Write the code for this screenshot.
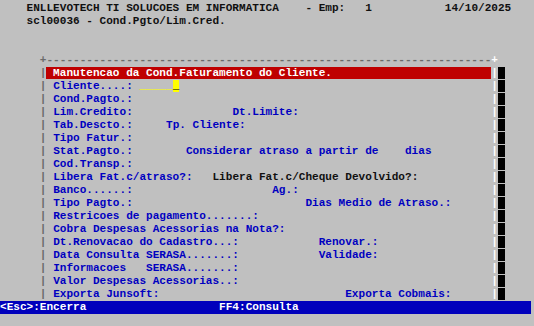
import type { ReactNode } from "react";

type Seg = { at: number; text: string; cls?: string };

const BLUE = "text-[#0000c0]";
const DARK = "text-[#101010]";

// renders one 80-column terminal line, segments placed by column
function Line({ segs, className = "" }: { segs: Seg[]; className?: string }) {
  const out: ReactNode[] = [];
  let col = 0;
  segs.forEach((s, i) => {
    if (s.at > col) out.push(" ".repeat(s.at - col));
    out.push(
      <span key={i} className={s.cls}>
        {s.text}
      </span>
    );
    col = s.at + s.text.length;
  });
  return <div className={`h-[13px] whitespace-pre ${className}`}>{out}</div>;
}

// row inside the window: left bar, fields, right bar and shadow
function Framed({ segs }: { segs: Seg[] }) {
  return (
    <Line
      segs={[
        { at: 6, text: "|", cls: "text-[#6a6a6a]" },
        ...segs,
        { at: 74, text: "|", cls: "text-white" },
        { at: 75, text: " ", cls: "bg-black" },
      ]}
    />
  );
}

const rows: Seg[][] = [
  [
    { at: 8, text: "Cliente....:", cls: BLUE },
    { at: 21, text: "_____", cls: "text-[#ffff00]" },
    { at: 26, text: "_", cls: "bg-[#ffff00] text-black" },
  ],
  [{ at: 8, text: "Cond.Pagto.:", cls: BLUE }],
  [
    { at: 8, text: "Lim.Credito:", cls: BLUE },
    { at: 35, text: "Dt.Limite:", cls: BLUE },
  ],
  [
    { at: 8, text: "Tab.Descto.:", cls: BLUE },
    { at: 25, text: "Tp. Cliente:", cls: BLUE },
  ],
  [{ at: 8, text: "Tipo Fatur.:", cls: BLUE }],
  [
    { at: 8, text: "Stat.Pagto.:", cls: BLUE },
    { at: 28, text: "Considerar atraso a partir de    dias", cls: BLUE },
  ],
  [{ at: 8, text: "Cod.Transp.:", cls: BLUE }],
  [
    { at: 8, text: "Libera Fat.c/atraso?:", cls: BLUE },
    { at: 32, text: "Libera Fat.c/Cheque Devolvido?:", cls: DARK },
  ],
  [
    { at: 8, text: "Banco......:", cls: BLUE },
    { at: 41, text: "Ag.:", cls: BLUE },
  ],
  [
    { at: 8, text: "Tipo Pagto.:", cls: BLUE },
    { at: 46, text: "Dias Medio de Atraso.:", cls: BLUE },
  ],
  [{ at: 8, text: "Restricoes de pagamento.......:", cls: BLUE }],
  [{ at: 8, text: "Cobra Despesas Acessorias na Nota?:", cls: BLUE }],
  [
    { at: 8, text: "Dt.Renovacao do Cadastro...:", cls: BLUE },
    { at: 48, text: "Renovar.:", cls: BLUE },
  ],
  [
    { at: 8, text: "Data Consulta SERASA.......:", cls: BLUE },
    { at: 48, text: "Validade:", cls: BLUE },
  ],
  [{ at: 8, text: "Informacoes   SERASA.......:", cls: BLUE }],
  [{ at: 8, text: "Valor Despesas Acessorias..:", cls: BLUE }],
  [
    { at: 8, text: "Exporta Junsoft:", cls: BLUE },
    { at: 52, text: "Exporta Cobmais:", cls: BLUE },
  ],
];

export default function App() {
  const title = " Manutencao da Cond.Faturamento do Cliente.";
  return (
    <div className="min-h-screen w-full bg-[#c0c0c0] pt-[2px] font-['Liberation_Mono','Courier_New',monospace] text-[11.07px] leading-[13px] font-bold">
      <Line
        segs={[
          { at: 4, text: "ENLLEVOTECH TI SOLUCOES EM INFORMATICA", cls: DARK },
          { at: 46, text: "- Emp:", cls: DARK },
          { at: 55, text: "1", cls: DARK },
          { at: 67, text: "14/10/2025", cls: DARK },
        ]}
      />
      <Line segs={[{ at: 4, text: "scl00036 - Cond.Pgto/Lim.Cred.", cls: DARK }]} />
      <Line segs={[]} />
      <Line segs={[]} />
      <Line
        segs={[
          { at: 6, text: "+" + "-".repeat(67), cls: "text-[#6a6a6a]" },
          { at: 74, text: "+", cls: "text-white" },
        ]}
      />
      <Framed segs={[{ at: 7, text: title.padEnd(67, " "), cls: "bg-[#bf0000] text-white" }]} />
      {rows.map((segs, i) => (
        <Framed key={i} segs={segs} />
      ))}
      <Line
        className="w-[80ch] bg-[#0000bc] text-white"
        segs={[
          { at: 0, text: "<Esc>:Encerra" },
          { at: 33, text: "FF4:Consulta" },
        ]}
      />
    </div>
  );
}
